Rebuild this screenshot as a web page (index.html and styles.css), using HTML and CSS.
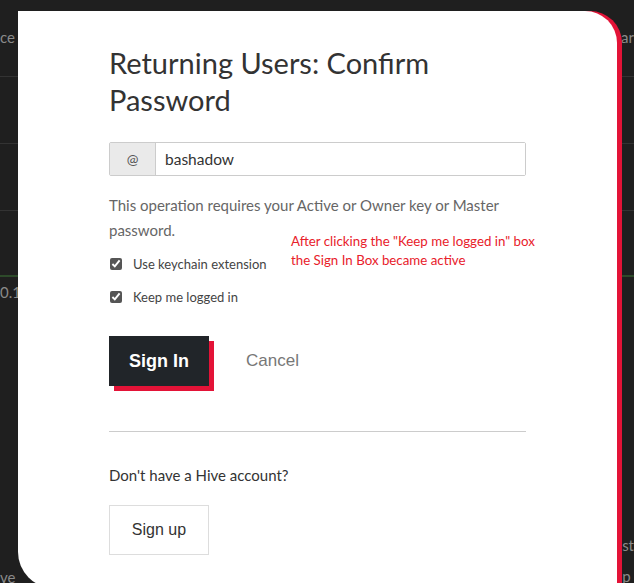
FILE: index.html
```html
<!DOCTYPE html>
<html lang="en">

<head>
    <meta charset="UTF-8">
    <meta name="viewport" content="width=device-width, initial-scale=1.0">
    <title>Confirm Password</title>
    <link rel="stylesheet" href="styles.css">
</head>

<body>
    <!-- Dimmed page behind the modal -->
    <div class="backdrop">
        <div class="bg-row bg-head"><span>ce</span><span>ar</span></div>
        <div class="bg-row"><span></span><span></span></div>
        <div class="bg-row"><span></span><span></span></div>
        <div class="bg-row bg-green"><span></span><span></span></div>
        <div class="bg-row bg-num"><span>0.1</span><span></span></div>
        <div class="bg-row bg-tall"><span></span><span></span></div>
        <div class="bg-row bg-foot"><span class="foot-left">ve</span><span class="foot-right">st<br>p</span></div>
    </div>

    <!-- Login modal -->
    <div class="modal">
        <h1>Returning Users: Confirm Password</h1>

        <div class="input-group">
            <span class="addon">@</span>
            <input type="text" value="bashadow">
        </div>

        <p class="info">This operation requires your Active or Owner key or Master password.</p>

        <label class="check"><input type="checkbox" checked> Use keychain extension</label>
        <label class="check"><input type="checkbox" checked> Keep me logged in</label>

        <div class="actions">
            <button class="btn-signin">Sign In</button>
            <button class="btn-cancel">Cancel</button>
        </div>

        <hr>

        <p class="signup-text">Don't have a Hive account?</p>
        <button class="btn-signup">Sign up</button>

        <!-- screenshot annotation -->
        <div class="note">After clicking the "Keep me logged in" box<br>the Sign In Box became active</div>
    </div>
</body>

</html>
```

FILE: styles.css
```css
/* Reset */
* {
    margin: 0;
    padding: 0;
    box-sizing: border-box;
}

body {
    font-family: Lato, "Open Sans", sans-serif;
    background-color: #1f1f1f;
    width: 634px;
    height: 583px;
    overflow: hidden;
    position: relative;
}

/* Backdrop page */
.backdrop {
    display: flex;
    flex-direction: column;
    height: 583px;
    overflow: hidden;
    color: #8a8a8a;
    font-size: 15px;
}

.bg-row {
    display: flex;
    justify-content: space-between;
    flex-shrink: 0;
    height: 67px;
    border-bottom: 1px solid #333;
}

.bg-row span {
    padding-top: 28px;
}

.bg-head {
    height: 77px;
}

.bg-green {
    height: 66px;
    border-bottom: 2px solid #2d4a2a;
}

.bg-num {
    height: 20px;
    border-bottom: none;
}

.bg-num span {
    padding-top: 6px;
}

.bg-tall {
    height: 216px;
    border-bottom: none;
}

.bg-foot {
    height: 70px;
    border-bottom: none;
    overflow: hidden;
}

.bg-foot .foot-left {
    padding-top: 53px;
    line-height: 22px;
}

.bg-foot .foot-right {
    padding-top: 17px;
    line-height: 31px;
}

/* Modal */
.modal {
    position: absolute;
    left: 18px;
    top: 11px;
    width: 599px;
    height: 577px;
    background-color: #fff;
    border-radius: 0 32px 0 36px;
    box-shadow: 5px 0 0 #e31337;
    padding: 33px 91px 0 91px;
    color: #333;
}

h1 {
    font-weight: 400;
    font-size: 29px;
    line-height: 37px;
    color: #333;
    width: 360px;
    margin-bottom: 24px;
}

.input-group {
    display: flex;
    width: 417px;
    height: 34px;
    border: 1px solid #ccc;
    border-radius: 2px;
}

.input-group .addon {
    width: 46px;
    background-color: #eaeaea;
    border-right: 1px solid #ccc;
    text-align: center;
    line-height: 32px;
    font-size: 14px;
    color: #555;
}

.input-group input {
    flex: 1;
    border: none;
    padding-left: 9px;
    font-family: inherit;
    font-size: 15.5px;
    color: #333;
}

.info {
    margin-top: 17px;
    font-size: 15px;
    line-height: 25px;
    color: #666;
    width: 400px;
}

.check {
    display: flex;
    align-items: center;
    gap: 11px;
    font-size: 13px;
    color: #444;
    margin-top: 9px;
    height: 24px;
}

.check + .check {
    margin-top: 9px;
}

.check input {
    width: 12px;
    height: 12px;
    margin-left: 1px;
    accent-color: #555;
}

.actions {
    display: flex;
    align-items: center;
    gap: 37px;
    margin-top: 27px;
}

.btn-signin {
    width: 100px;
    height: 50px;
    background-color: #212529;
    color: #fff;
    border: none;
    font-family: "Liberation Sans", Arial, sans-serif;
    font-weight: 700;
    font-size: 18px;
    box-shadow: 5px 5px 0 #e31337;
    cursor: pointer;
}

.btn-cancel {
    background: none;
    border: none;
    font-family: "Liberation Sans", Arial, sans-serif;
    font-size: 17px;
    color: #777;
    cursor: pointer;
}

hr {
    width: 417px;
    border: none;
    border-top: 1px solid #ccc;
    margin-top: 45px;
}

.signup-text {
    margin-top: 34px;
    font-size: 15px;
    color: #333;
}

.btn-signup {
    margin-top: 21px;
    width: 100px;
    height: 50px;
    background-color: #fff;
    border: 1px solid #ddd;
    font-family: "Liberation Sans", Arial, sans-serif;
    font-size: 16px;
    color: #333;
    cursor: pointer;
}

/* Annotation over the form */
.note {
    position: absolute;
    left: 273px;
    top: 221px;
    font-size: 13.3px;
    line-height: 19px;
    color: #e8202a;
    white-space: nowrap;
}
```
